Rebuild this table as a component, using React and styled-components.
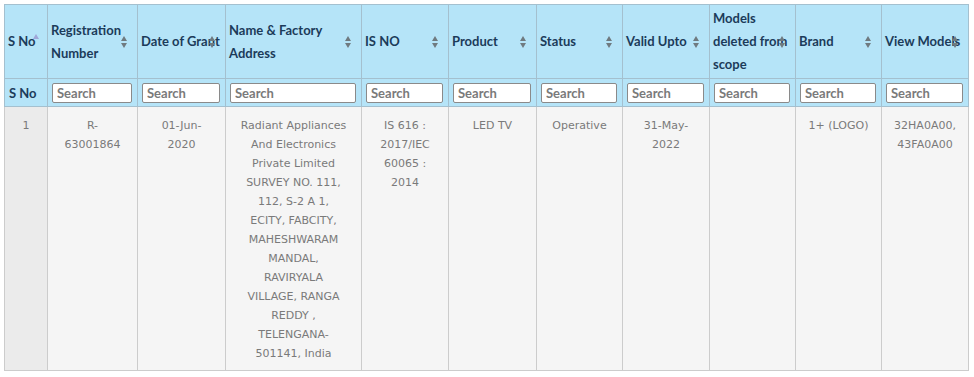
import React from "react";
import styled, { createGlobalStyle } from "styled-components";

const GlobalStyle = createGlobalStyle`
  html, body {
    margin: 0;
    padding: 0;
    background: #ffffff;
  }
`;

const columns = [
  { title: ["S No"], width: 43, sort: "asc" },
  { title: ["Registration", "Number"], width: 90 },
  { title: ["Date of Grant"], width: 88 },
  { title: ["Name & Factory", "Address"], width: 136 },
  { title: ["IS NO"], width: 87 },
  { title: ["Product"], width: 88 },
  { title: ["Status"], width: 86 },
  { title: ["Valid Upto"], width: 87 },
  { title: ["Models", "deleted from", "scope"], width: 86 },
  { title: ["Brand"], width: 86 },
  { title: ["View Models"], width: 87 },
];

const row = [
  ["1"],
  ["R-", "63001864"],
  ["01-Jun-", "2020"],
  [
    "Radiant Appliances",
    "And Electronics",
    "Private Limited",
    "SURVEY NO. 111,",
    "112, S-2 A 1,",
    "ECITY, FABCITY,",
    "MAHESHWARAM",
    "MANDAL,",
    "RAVIRYALA",
    "VILLAGE, RANGA",
    "REDDY ,",
    "TELENGANA-",
    "501141, India",
  ],
  ["IS 616 :", "2017/IEC", "60065 :", "2014"],
  ["LED TV"],
  ["Operative"],
  ["31-May-", "2022"],
  [],
  ["1+ (LOGO)"],
  ["32HA0A00,", "43FA0A00"],
];

const Page = styled.div`
  padding: 4px 5px 0 4px;
`;

const Table = styled.table`
  border-collapse: collapse;
  table-layout: fixed;
  width: 964px;
`;

const HeadCell = styled.th`
  position: relative;
  background: #b5e4f8;
  border: 1px solid #a4c0cf;
  color: #1c3b5a;
  font-family: Lato, "Liberation Sans", sans-serif;
  font-weight: 700;
  font-size: 13px;
  line-height: 23px;
  text-align: left;
  vertical-align: middle;
  padding: 2px 0 2px 3px;
  height: 69px;
  white-space: nowrap;
`;

const SearchCell = styled.th`
  background: #b5e4f8;
  border: 1px solid #a4c0cf;
  color: #1c3b5a;
  font-family: Lato, "Liberation Sans", sans-serif;
  font-weight: 700;
  font-size: 13px;
  text-align: left;
  padding: 3px 5px 3px 4px;
  height: 21px;
`;

const SearchInput = styled.input`
  box-sizing: border-box;
  width: 100%;
  height: 20px;
  border: 1px solid #8a8a8a;
  border-radius: 2px;
  background: #ffffff;
  padding: 0 4px;
  font-family: Lato, "Liberation Sans", sans-serif;
  font-weight: 700;
  font-size: 13px;
  color: #555;
  &::placeholder {
    color: #7a7a7a;
    opacity: 1;
  }
`;

const SortMark = styled.svg`
  position: absolute;
  right: ${({ $asc }) => ($asc ? "8px" : "10px")};
  top: ${({ $asc }) => ($asc ? "29px" : "31px")};
`;

const BodyCell = styled.td`
  background: ${({ $sorted }) => ($sorted ? "#ebebeb" : "#f5f5f5")};
  border: 1px solid #cccccc;
  color: #7a7a7a;
  font-family: "DejaVu Sans", Verdana, sans-serif;
  font-size: 11px;
  line-height: 19px;
  text-align: center;
  vertical-align: top;
  padding: 9px 4px 7px;
`;

const Line = styled.div`
  white-space: nowrap;
`;

function SortIcon({ asc }) {
  if (asc) {
    return (
      <SortMark $asc width="6" height="5" viewBox="0 0 6 5">
        <polygon points="3,0 6,5 0,5" fill="#9fa6d8" />
      </SortMark>
    );
  }
  return (
    <SortMark width="6" height="12" viewBox="0 0 6 12">
      <polygon points="3,0 6,5 0,5" fill="#6f7a80" />
      <polygon points="0,7 6,7 3,12" fill="#6f7a80" />
    </SortMark>
  );
}

export default function App() {
  return (
    <Page>
      <GlobalStyle />
      <Table>
        <colgroup>
          {columns.map((c, i) => (
            <col key={i} style={{ width: c.width }} />
          ))}
        </colgroup>
        <thead>
          <tr>
            {columns.map((c, i) => (
              <HeadCell key={i}>
                {c.title.map((t, j) => (
                  <div key={j}>{t}</div>
                ))}
                <SortIcon asc={c.sort === "asc"} />
              </HeadCell>
            ))}
          </tr>
          <tr>
            {columns.map((c, i) =>
              i === 0 ? (
                <SearchCell key={i}>S No</SearchCell>
              ) : (
                <SearchCell key={i}>
                  <SearchInput placeholder="Search" />
                </SearchCell>
              )
            )}
          </tr>
        </thead>
        <tbody>
          <tr>
            {row.map((lines, i) => (
              <BodyCell key={i} $sorted={i === 0}>
                {lines.map((l, j) => (
                  <Line key={j}>{l}</Line>
                ))}
              </BodyCell>
            ))}
          </tr>
        </tbody>
      </Table>
    </Page>
  );
}
